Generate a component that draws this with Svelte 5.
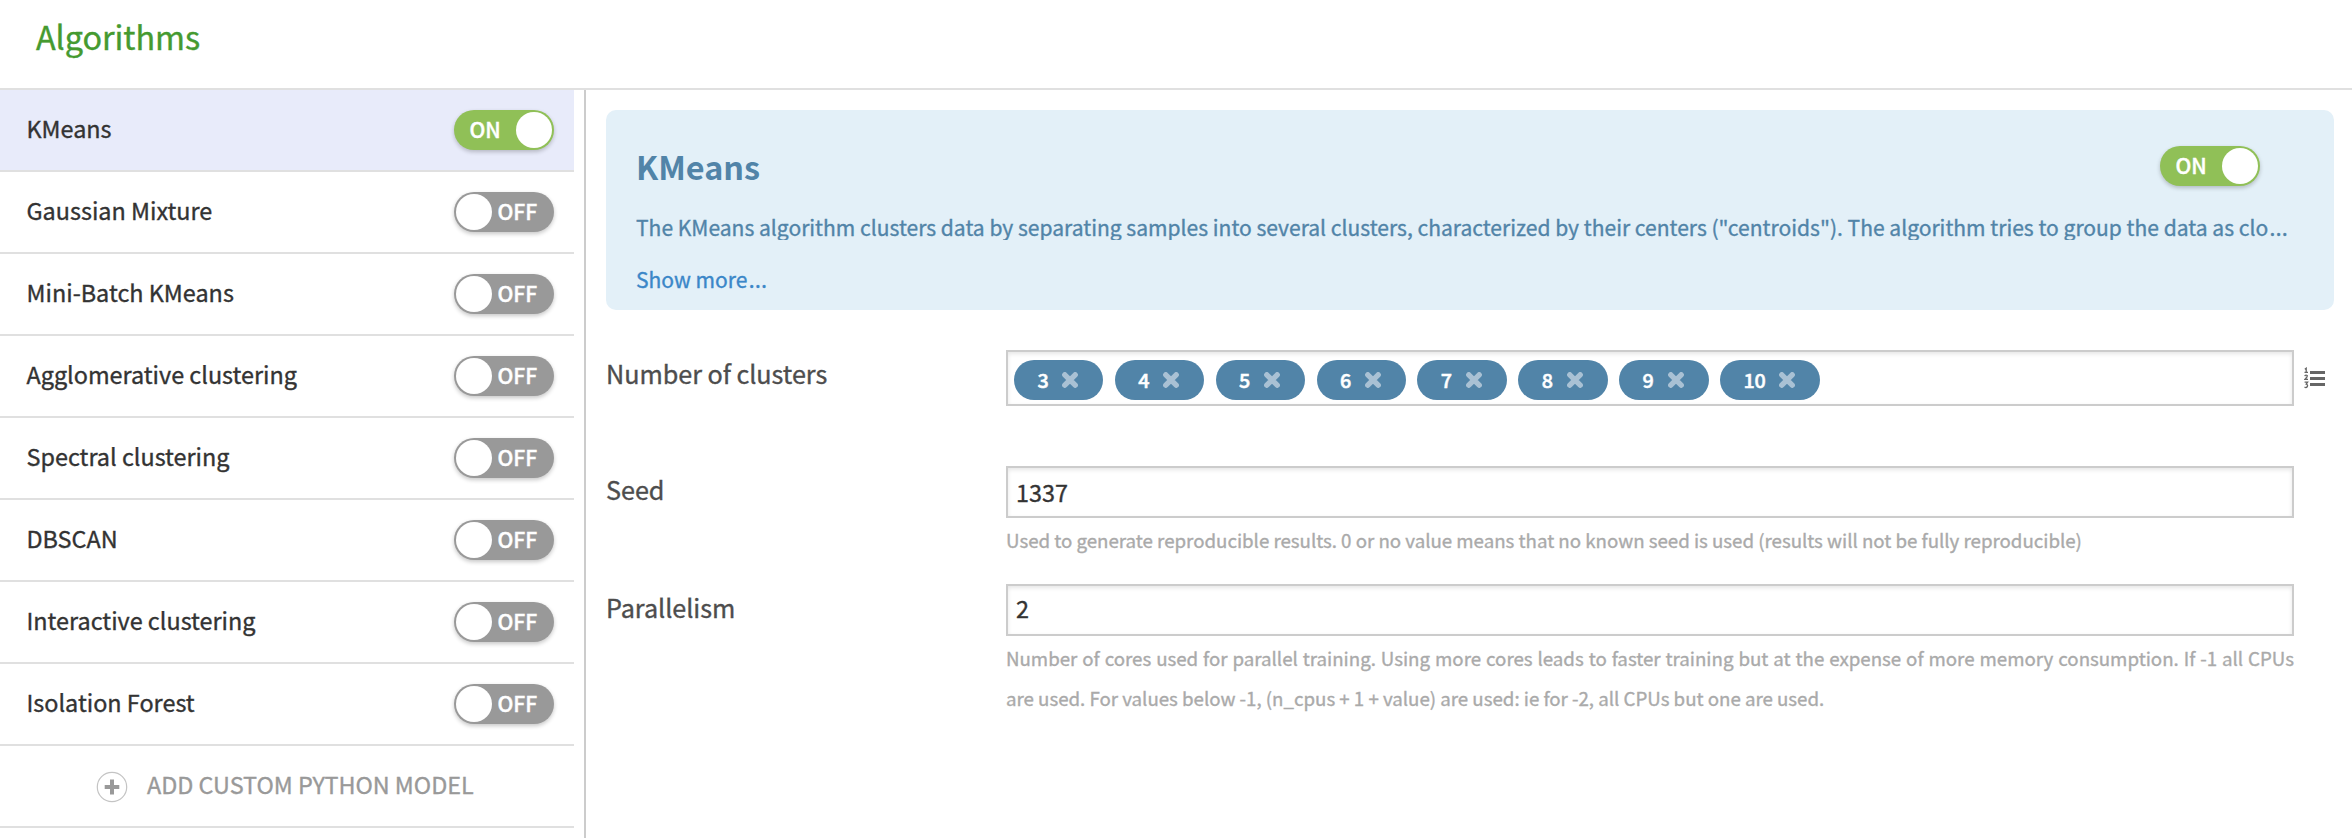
<script>
  let algorithms = $state([
    { name: 'KMeans', on: true },
    { name: 'Gaussian Mixture', on: false },
    { name: 'Mini-Batch KMeans', on: false },
    { name: 'Agglomerative clustering', on: false },
    { name: 'Spectral clustering', on: false },
    { name: 'DBSCAN', on: false },
    { name: 'Interactive clustering', on: false },
    { name: 'Isolation Forest', on: false }
  ]);
  let clusters = $state([3, 4, 5, 6, 7, 8, 9, 10]);
  const current = $derived(algorithms[0]);
</script>

{#snippet toggle(item)}
  <button class="toggle" class:on={item.on} onclick={() => (item.on = !item.on)}>
    <span class="state">{item.on ? 'ON' : 'OFF'}</span>
    <span class="knob"></span>
  </button>
{/snippet}

<div class="page">
  <header><h1>Algorithms</h1></header>
  <div class="body">
    <nav>
      {#each algorithms as item, i}
        <div class="item" class:selected={i === 0}>
          <span class="name">{item.name}</span>
          {@render toggle(item)}
        </div>
      {/each}
      <div class="item add">
        <svg width="32" height="32" viewBox="0 0 32 32">
          <circle cx="16" cy="16" r="14.7" fill="none" stroke="#c4c4c4" stroke-width="1.2" />
          <path d="M16 8.5V23.5M8.7 16H23.3" stroke="#999" stroke-width="4" />
        </svg>
        <span>ADD CUSTOM PYTHON MODEL</span>
      </div>
    </nav>
    <main>
      <section class="intro">
        <div class="top">
          <h2>KMeans</h2>
          {@render toggle(current)}
        </div>
        <p class="desc">The KMeans algorithm clusters data by separating samples into several clusters, characterized by their centers ("centroids"). The algorithm tries to group the data as clo<span class="dots">…</span></p>
        <a class="more" href="#more">Show more<span class="dots">…</span></a>
      </section>
      <div class="row clusters">
        <div class="label">Number of clusters</div>
        <div class="control">
          <div class="field tags">
            {#each clusters as n}
              <span class="chip">
                <span class="num">{n}</span>
                <svg width="16" height="16" viewBox="0 0 16 16">
                  <path d="M2.8 2.8L13.2 13.2M13.2 2.8L2.8 13.2" stroke="#a9c1d4" stroke-width="5.4" stroke-linecap="round" />
                </svg>
              </span>
            {/each}
          </div>
        </div>
        <svg class="list" width="22" height="22" viewBox="0 0 22 22">
          <path d="M6 5.5H21M6 11.5H21M6 17.5H21" stroke="#666" stroke-width="3" />
          <path d="M.8 2.2L2.2 1.2V5.2M.5 5.3H4M.6 9Q2 7.6 3.2 8.6Q3.8 9.8.8 12.4H4M.6 15.2H3.6L2.2 17.2Q4 17.6 3.4 19.4Q2.4 21.2.5 20.2" fill="none" stroke="#666" stroke-width="1.3" />
        </svg>
      </div>
      <div class="row">
        <div class="label">Seed</div>
        <div class="control">
          <div class="field value seed">1337</div>
          <p class="help">Used to generate reproducible results. 0 or no value means that no known seed is used (results will not be fully reproducible)</p>
        </div>
      </div>
      <div class="row">
        <div class="label">Parallelism</div>
        <div class="control">
          <div class="field value">2</div>
          <p class="help">Number of cores used for parallel training. Using more cores leads to faster training but at the expense of more memory consumption. If -1 all CPUs are used. For values below -1, (n_cpus + 1 + value) are used: ie for -2, all CPUs but one are used.</p>
        </div>
      </div>
    </main>
  </div>
</div>

<style>
  :global(body) { margin: 0; background: #fff; }
  .page {
    height: 838px;
    overflow: hidden;
    display: flex;
    flex-direction: column;
    font-family: "Noto Sans CJK SC", "Open Sans", sans-serif;
    font-size: 23.4px;
    color: #333;
    -webkit-text-stroke: 0.35px currentColor;
  }
  .page * { box-sizing: border-box; }
  h1, h2, p { margin: 0; }
  header { flex: none; height: 90px; border-bottom: 2px solid #e0e0e0; padding-left: 36px; }
  h1 { font-size: 32.4px; font-weight: 400; line-height: 71px; letter-spacing: -0.08px; color: #459a30; }
  .body { flex: 1; display: flex; min-height: 0; }
  nav { width: 574px; margin-right: 10px; flex: none; }
  .item {
    height: 82px;
    border-bottom: 2px solid #e0e0e0;
    padding: 0 20px 0 26.5px;
    display: flex;
    justify-content: space-between;
    align-items: flex-start;
    line-height: 76px;
  }
  .item.selected { background: #e8ebfa; }
  .item .toggle { margin-top: 20px; }
  .item.add { justify-content: flex-start; padding-left: 96px; gap: 19px; color: #999; letter-spacing: -0.03px; }
  .add svg { margin-top: 25px; }
  .toggle {
    flex: none;
    width: 100px;
    height: 40px;
    border: 0;
    border-radius: 20px;
    padding: 2px;
    display: flex;
    flex-direction: row-reverse;
    background: #999;
    color: #fff;
    font: 500 21.06px/34px "Noto Sans CJK SC", sans-serif;
    box-shadow: 0 2px 4px rgba(0, 0, 0, 0.22);
    -webkit-text-stroke: 0.4px currentColor;
  }
  .toggle.on { flex-direction: row; background: #90c057; }
  .state { flex: 1; text-align: left; padding-left: 5.5px; }
  .on .state { padding-left: 13.5px; }
  .knob { width: 36px; height: 36px; border-radius: 50%; background: #fff; }
  main { flex: 1; min-width: 0; border-left: 2px solid #ccc; padding: 20px 18px 0 20px; }
  .intro {
    height: 200px;
    margin-bottom: 40px;
    border-radius: 10px;
    background: #e3f0f8;
    padding: 20px 40px 0 30px;
    color: #5184a8;
  }
  .top { display: flex; justify-content: space-between; align-items: flex-start; padding-right: 34px; }
  .top .toggle { margin-top: 16px; }
  h2 { font-size: 32.4px; font-weight: 700; line-height: 71px; -webkit-text-stroke: 0; }
  .desc { margin-top: 12px; height: 27px; overflow: hidden; white-space: nowrap; font-size: 21.06px; line-height: 28px; }
  .more { display: block; margin-top: 25px; height: 28px; font-size: 21.06px; line-height: 28px; color: #3b87c8; text-decoration: none; }
  .dots { font-family: "Open Sans", sans-serif; font-size: 24px; line-height: 1px; letter-spacing: 1px; margin-left: 1px; }
  .row { display: flex; margin-bottom: 24px; }
  .row.clusters { margin-bottom: 60px; }
  .label { width: 400px; flex: none; font-size: 25.2px; line-height: 46px; color: #4d4d4d; letter-spacing: -0.04px; }
  .control { width: 1288px; flex: none; }
  .field { border: 2px solid #ccc; background: #fff; box-shadow: inset 0 2px 4px rgba(0, 0, 0, 0.1); }
  .value { height: 52px; padding-left: 8px; line-height: 44px; }
  .value.seed { line-height: 48px; }
  .tags { height: 56px; padding: 8px 6px; display: flex; gap: 11.5px; }
  .chip {
    height: 40px;
    border-radius: 20px;
    padding: 0 25px 0 23.4px;
    display: flex;
    gap: 13.9px;
    background: #5184a8;
    color: #fff;
    font-size: 19.8px;
    font-weight: 500;
    line-height: 39px;
    -webkit-text-stroke: 0.5px currentColor;
  }
  .num { letter-spacing: -0.2px; }
  .chip svg { margin-top: 12px; }
  .list { margin: 17px 0 0 9.5px; }
  .help { margin-top: 2px; font-size: 18.72px; line-height: 40px; letter-spacing: -0.012px; color: #aaa; text-align: justify; }
</style>
